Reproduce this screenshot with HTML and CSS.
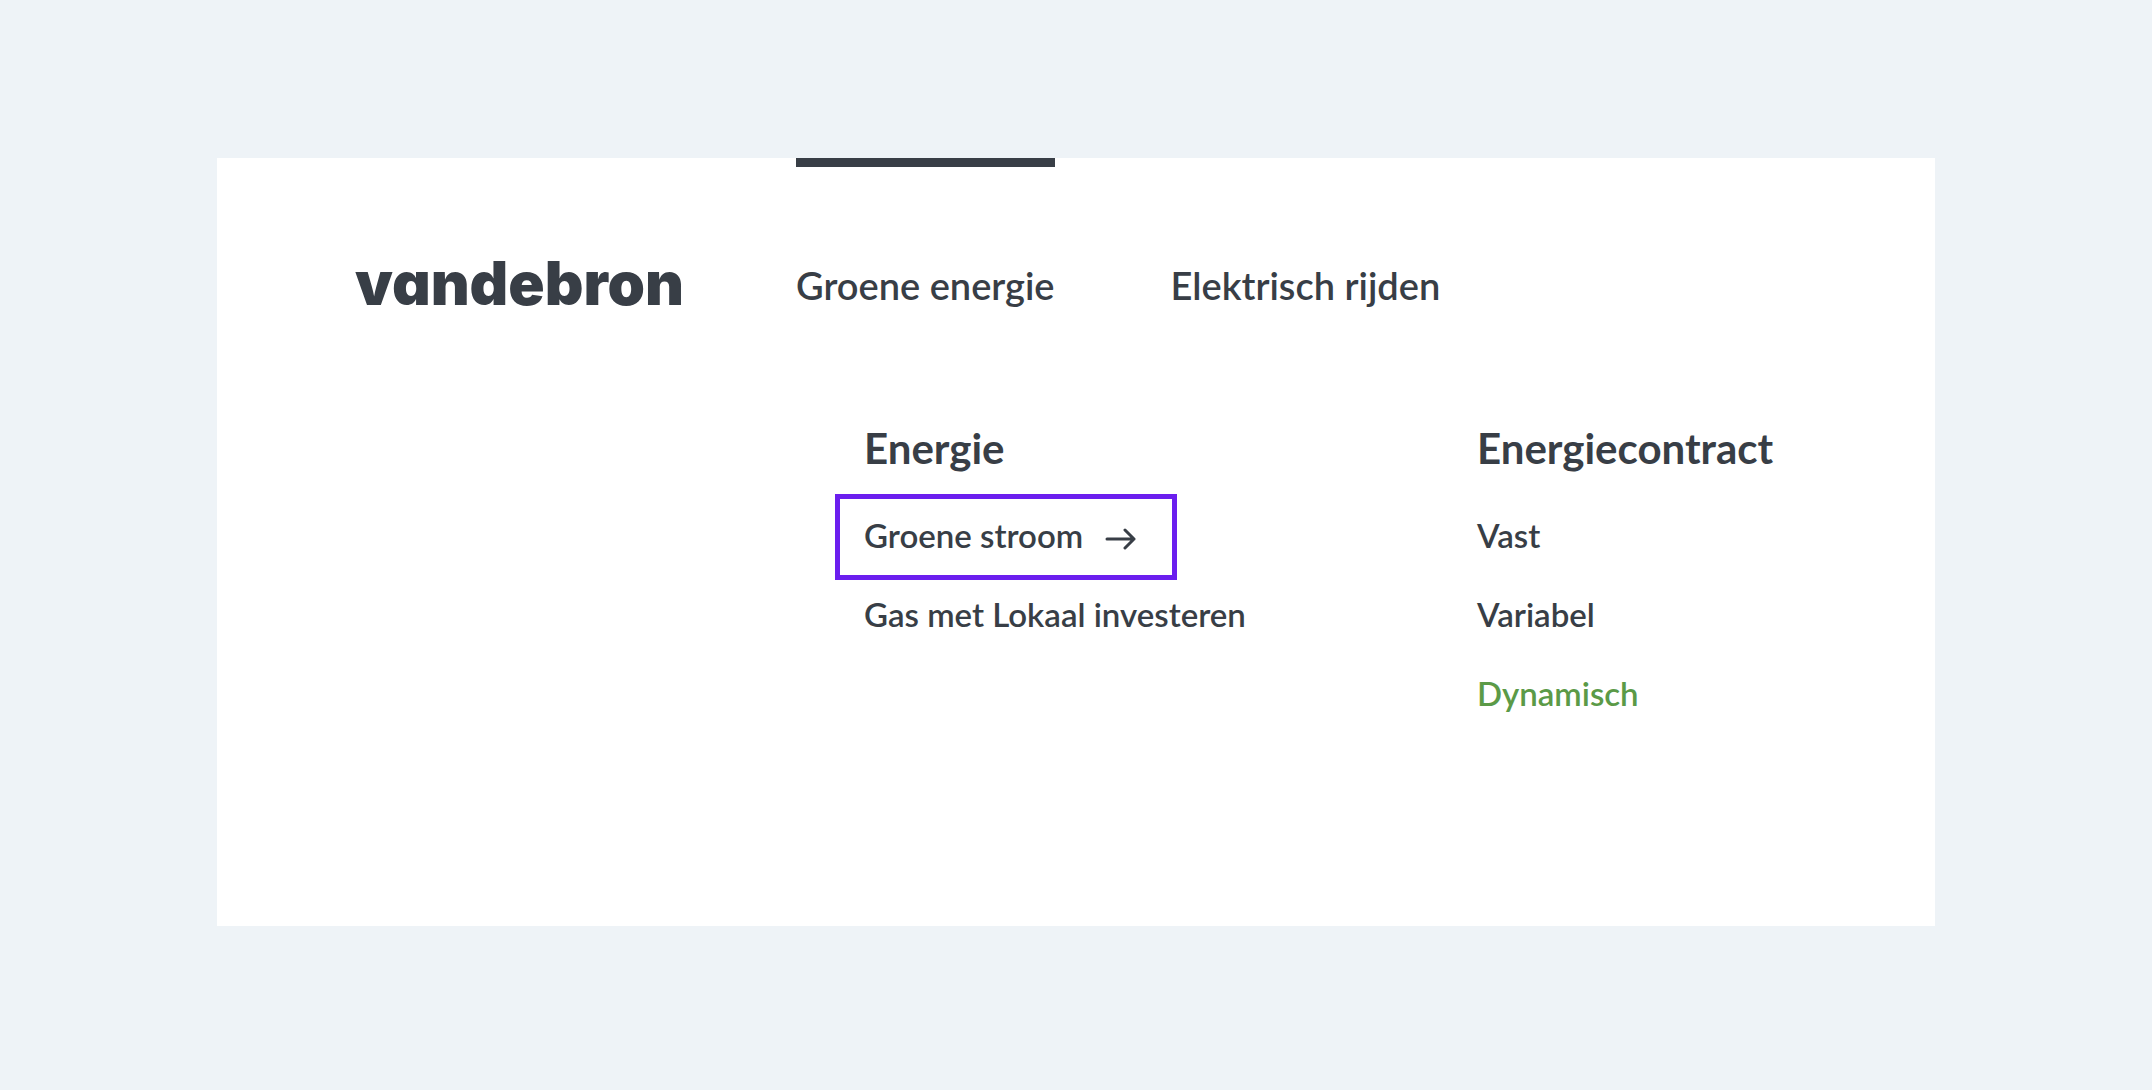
FILE: index.html
```html
<!DOCTYPE html>
<html lang="nl">
<head>
    <meta charset="UTF-8">
    <meta name="viewport" content="width=device-width, initial-scale=1.0">
    <title>Vandebron</title>
    <link rel="stylesheet" href="styles.css">
</head>
<body>
    <div class="panel">
        <header class="header">
            <a href="#" class="logo">vandebron</a>
            <nav class="main-nav">
                <a href="#" class="main-link active">Groene energie</a>
                <a href="#" class="main-link">Elektrisch rijden</a>
            </nav>
        </header>

        <div class="menu">
            <section>
                <h2 class="menu-title">Energie</h2>
                <ul class="menu-list">
                    <li>
                        <a href="#" class="menu-link focused">
                            Groene stroom
                            <svg class="arrow" width="32" height="22" viewBox="0 0 32 22" aria-hidden="true">
                                <path d="M2 11H29M20 2L29 11L20 20" />
                            </svg>
                        </a>
                    </li>
                    <li><a href="#" class="menu-link">Gas met Lokaal investeren</a></li>
                </ul>
            </section>
            <section>
                <h2 class="menu-title">Energiecontract</h2>
                <ul class="menu-list">
                    <li><a href="#" class="menu-link">Vast</a></li>
                    <li><a href="#" class="menu-link">Variabel</a></li>
                    <li><a href="#" class="menu-link current">Dynamisch</a></li>
                </ul>
            </section>
        </div>
    </div>
</body>
</html>
```
FILE: styles.css
```css
* {
    box-sizing: border-box;
}

body {
    margin: 0;
    min-height: 100vh;
    padding: 158px 217px 164px;
    display: flex;
    flex-direction: column;
    background: #eef3f7;
    color: #383e46;
    font-family: Lato, 'Open Sans', sans-serif;
}

a {
    color: inherit;
    text-decoration: none;
}

.panel {
    flex: 1;
    padding: 0 138px 60px;
    background: #fff;
}

/* ===== Header ===== */
.header {
    display: flex;
    align-items: flex-end;
    gap: 112px;
}

.logo {
    font-family: Inter, sans-serif;
    font-size: 60px;
    font-weight: 900;
    font-feature-settings: 'cv11'; /* single-storey a */
    line-height: 50px;
}

.main-nav {
    display: flex;
    gap: 116px;
}

.main-link {
    padding-top: 95px;
    border-top: 9px solid transparent;
    font-size: 38px;
    font-weight: 600;
    line-height: 46px;
    white-space: nowrap;
}

.main-link.active {
    border-top-color: #383e46;
}

/* ===== Dropdown menu ===== */
.menu {
    display: grid;
    grid-template-columns: 613px 1fr;
    margin-top: 115px;
    padding-left: 509px;
}

.menu-title {
    margin: 0 0 26px;
    font-size: 42px;
    font-weight: 700;
    line-height: 50px;
}

.menu-list {
    margin: 0;
    padding: 0;
    list-style: none;
    display: flex;
    flex-direction: column;
    align-items: flex-start;
    gap: 3px;
}

.menu-link {
    display: inline-flex;
    align-items: center;
    gap: 22px;
    padding-bottom: 4px;
    font-size: 33px;
    font-weight: 600;
    line-height: 72px;
    white-space: nowrap;
}

.menu-link.focused {
    margin-left: -24px;
    padding-left: 24px;
    padding-right: 35px;
    outline: 5px solid #6b1eee;
}

.menu-link.current {
    color: #5b9a47;
}

.arrow {
    margin-top: 8px;
    fill: none;
    stroke: currentColor;
    stroke-width: 3;
    stroke-linecap: round;
    stroke-linejoin: round;
}
```
